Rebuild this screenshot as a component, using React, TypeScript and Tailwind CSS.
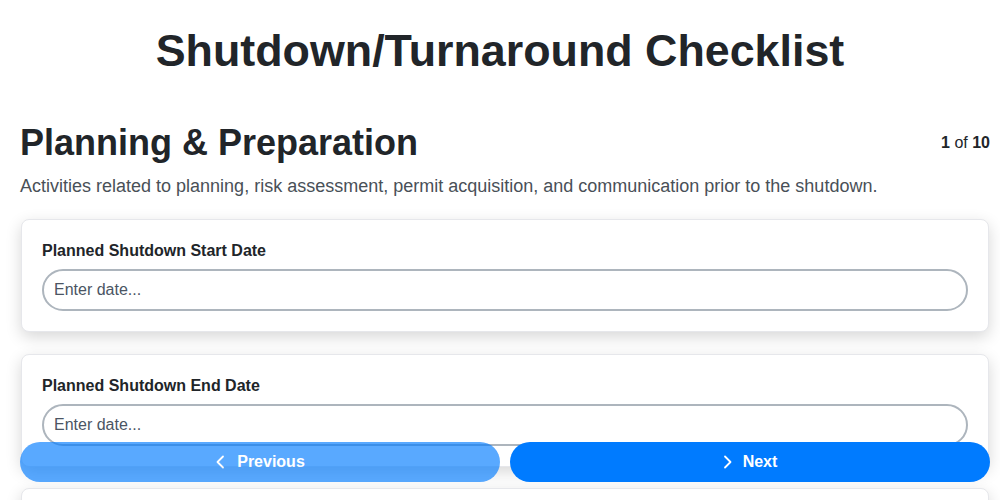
import React from 'react';

const fields = [
  { label: 'Planned Shutdown Start Date', placeholder: 'Enter date...' },
  { label: 'Planned Shutdown End Date', placeholder: 'Enter date...' },
  { label: 'Shutdown Coordinator', placeholder: 'Enter name...' },
];

const ChevronLeft = () => (
  <svg width="10" height="14" viewBox="0 0 10 14" fill="none">
    <path d="M8 1.5 L2.5 7 L8 12.5" stroke="currentColor" strokeWidth="1.8" strokeLinecap="round" strokeLinejoin="round" />
  </svg>
);

const ChevronRight = () => (
  <svg width="10" height="14" viewBox="0 0 10 14" fill="none">
    <path d="M2 1.5 L7.5 7 L2 12.5" stroke="currentColor" strokeWidth="1.8" strokeLinecap="round" strokeLinejoin="round" />
  </svg>
);

export default function App() {
  return (
    <div className="relative h-screen overflow-hidden bg-white text-[#212529] font-['Liberation_Sans',Arial,sans-serif]">
      <h1 className="pt-[23px] text-center text-[44.8px] leading-[54px] font-bold">
        Shutdown/Turnaround Checklist
      </h1>

      <div className="pl-5 pr-[10px] pb-24">
        {/* Section header */}
        <div className="mt-[44px] flex items-center justify-between">
          <h2 className="text-[36px] leading-[43px] font-bold">Planning &amp; Preparation</h2>
          <div className="text-base">
            <span className="font-bold">1</span> of <span className="font-bold">10</span>
          </div>
        </div>
        <p className="mt-[9px] text-[18px] leading-[27px] text-[#495057]">
          Activities related to planning, risk assessment, permit acquisition, and communication prior to the shutdown.
        </p>

        <div className="mt-[19px] flex flex-col gap-[21.5px] pl-px pr-px">
          {fields.map((f) => (
            <div
              key={f.label}
              className="rounded-lg border border-[#e6e7eb] bg-white px-5 pt-[19px] pb-5 shadow-[0_5px_16px_rgba(0,0,0,0.16)]"
            >
              <label className="mb-[6px] block text-base leading-6 font-bold">{f.label}</label>
              <input
                type="text"
                placeholder={f.placeholder}
                className="block h-[42px] w-full rounded-full border-2 border-[#adb5bd] bg-white px-[10px] text-base text-[#212529] outline-none placeholder:text-[#4b5563]"
              />
            </div>
          ))}
        </div>
      </div>

      {/* Navigation */}
      <div className="fixed left-5 right-[10px] bottom-[18px] flex gap-[10px]">
        <button
          disabled
          className="flex h-10 flex-1 items-center justify-center gap-[12px] rounded-full bg-[#007bff] text-base font-bold text-white opacity-65"
        >
          <ChevronLeft />
          Previous
        </button>
        <button className="flex h-10 flex-1 items-center justify-center gap-[10px] rounded-full bg-[#007bff] text-base font-bold text-white">
          <ChevronRight />
          Next
        </button>
      </div>
    </div>
  );
}
